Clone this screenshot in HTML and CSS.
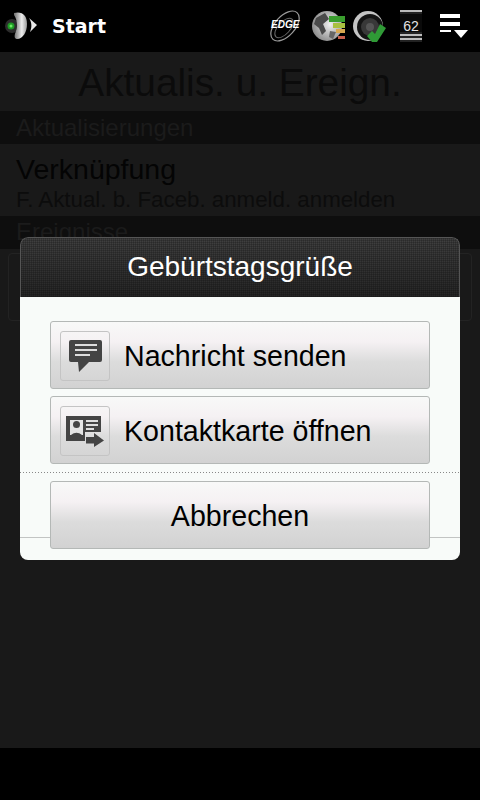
FILE: index.html
```html
<!DOCTYPE html>
<html lang="de">
<head>
    <meta charset="UTF-8">
    <meta name="viewport" content="width=device-width, initial-scale=1.0">
    <title>Start</title>
    <link rel="stylesheet" href="styles.css">
</head>
<body>
    <header class="status-bar">
        <svg class="logo" width="34" height="28" viewBox="0 0 34 28">
            <defs>
                <linearGradient id="logo-shade" x1="0" y1="0" x2="1" y2="0">
                    <stop offset="0" stop-color="#6e6e6e"/>
                    <stop offset="0.6" stop-color="#ececec"/>
                    <stop offset="1" stop-color="#9a9a9a"/>
                </linearGradient>
            </defs>
            <circle cx="7" cy="14" r="7" fill="#2c2c2c"/>
            <circle cx="6" cy="14" r="3.500" fill="#1f9a26"/>
            <circle cx="6" cy="14" r="1.500" fill="#6dee62"/>
            <path d="M9 1 C17 -1 22 3 22 12 C22 20 18 27 12 27 C8 26 10 22 11 19 C13 15 12 7 9 3Z" fill="url(#logo-shade)"/>
            <path d="M24 6 L32 13 L25 20 C27 15 27 11 24 6Z" fill="#e8e8e8"/>
        </svg>
        <span class="status-title">Start</span>
        <div class="status-icons">
            <div class="icon-edge">
                <svg width="32" height="32" viewBox="0 0 32 32">
                    <ellipse cx="16" cy="16" rx="18" ry="10" transform="rotate(-48 16 16)" fill="none" stroke="#9a9a9a" stroke-width="1.200"/>
                    <ellipse cx="15" cy="18" rx="12" ry="6" transform="rotate(-48 15 18)" fill="none" stroke="#666" stroke-width="1"/>
                </svg>
                <span class="edge-label">EDGE</span>
            </div>
            <svg class="icon-globe" width="34" height="32" viewBox="0 0 34 32">
                <defs>
                    <radialGradient id="globe-shade" cx="0.6" cy="0.45" r="0.7">
                        <stop offset="0" stop-color="#f0f0f0"/>
                        <stop offset="1" stop-color="#7c7c7c"/>
                    </radialGradient>
                </defs>
                <circle cx="15" cy="16" r="15" fill="url(#globe-shade)"/>
                <path d="M4 8 L13 3 L17 9 L11 14 L14 21 L10 25 L7 18 L2 14Z" fill="#4a4a4a"/>
                <path d="M18 21 L24 22 L21 29 L17 27Z" fill="#666"/>
                <rect x="17" y="6" width="16" height="6" fill="#3a9e2e"/>
                <rect x="21" y="13" width="12" height="5" fill="#a9c040"/>
                <rect x="24" y="19" width="9" height="4" fill="#d8a850"/>
                <rect x="26" y="26" width="7" height="3" fill="#c8604c"/>
            </svg>
            <svg class="icon-speaker" width="33" height="32" viewBox="0 0 33 32">
                <circle cx="15" cy="16" r="15" fill="#c4c4c4"/>
                <circle cx="17" cy="17" r="13" fill="#141414"/>
                <circle cx="17" cy="17" r="9" fill="#383838"/>
                <circle cx="17" cy="17" r="4" fill="#555"/>
                <path d="M14 26 L19 21 L22 24 L27 14 L33 18 L24 32 L19 32Z" fill="#2f9a36"/>
            </svg>
            <div class="battery"><span class="battery-num">62</span></div>
            <svg class="icon-menu" width="28" height="24" viewBox="0 0 28 24">
                <rect x="0" y="0" width="20" height="4" fill="#fff"/>
                <rect x="0" y="8" width="20" height="4" fill="#fff"/>
                <rect x="0" y="16" width="11" height="2" fill="#fff"/>
                <path d="M14 16 H28 L21 24Z" fill="#fff"/>
            </svg>
        </div>
    </header>

    <main class="screen">
        <h1 class="page-title">Aktualis. u. Ereign.</h1>
        <div class="section-head">Aktualisierungen</div>
        <div class="item">
            <div class="item-title">Verknüpfung</div>
            <div class="item-sub">F. Aktual. b. Faceb. anmeld. anmelden</div>
        </div>
        <div class="section-head section-head-low">Ereignisse</div>
        <div class="event-card"></div>
    </main>

    <footer class="bottom-bar"></footer>

    <div class="dialog">
        <div class="dialog-head">Gebürtstagsgrüße</div>
        <div class="dialog-body">
            <button class="btn">
                <span class="btn-icon">
                    <svg width="33" height="32" viewBox="0 0 33 32">
                        <path d="M2 0 H31 a2 2 0 0 1 2 2 V20 a2 2 0 0 1 -2 2 H20 L10 32 L9 22 H2 a2 2 0 0 1 -2 -2 V2 a2 2 0 0 1 2 -2Z" fill="#444"/>
                        <rect x="6" y="4" width="22" height="2" fill="#ddd"/>
                        <rect x="6" y="9" width="22" height="2" fill="#ddd"/>
                        <rect x="6" y="14" width="15" height="2" fill="#ddd"/>
                    </svg>
                </span>
                <span class="btn-label">Nachricht senden</span>
            </button>
            <button class="btn btn-last">
                <span class="btn-icon">
                    <svg width="38" height="31" viewBox="0 0 38 31">
                        <path d="M0 0 H35 V16 H19 V25 H0Z" fill="#444"/>
                        <rect x="4" y="4" width="13" height="15" fill="#e4e4e4"/>
                        <circle cx="10.500" cy="8.500" r="3.500" fill="#444"/>
                        <path d="M3 25 C3 14 18 14 18 25Z" fill="#444"/>
                        <rect x="20" y="4" width="12" height="2" fill="#ddd"/>
                        <rect x="20" y="8" width="12" height="2" fill="#ddd"/>
                        <rect x="20" y="12" width="8" height="2" fill="#ddd"/>
                        <path d="M20 21 H28 V17 L38 24.500 L28 31 V27.500 H20Z" fill="#444"/>
                    </svg>
                </span>
                <span class="btn-label">Kontaktkarte öffnen</span>
            </button>
            <div class="dots"></div>
            <div class="cancel-wrap">
                <button class="btn btn-cancel"><span class="btn-label-plain">Abbrechen</span></button>
            </div>
        </div>
    </div>
</body>
</html>
```

FILE: styles.css
```css
body {
    font-family: "Liberation Sans", Arial, sans-serif;
    margin: 0;
    width: 480px;
    height: 800px;
    background-color: #000;
    display: flex;
    flex-direction: column;
    overflow: hidden;
    position: relative;
}
.status-bar {
    height: 52px;
    display: flex;
    align-items: center;
    background-color: #000;
    flex-shrink: 0;
}
.logo {
    margin-left: 5px;
}
.status-title {
    margin-left: 13px;
    color: #fff;
    font-family: "DejaVu Sans", sans-serif;
    font-weight: bold;
    font-size: 19px;
}
.status-icons {
    margin-left: auto;
    display: flex;
    align-items: center;
    padding-right: 12px;
}
.icon-edge {
    position: relative;
    width: 32px;
    height: 32px;
}
.edge-label {
    position: absolute;
    left: 2px;
    top: 9px;
    color: #fff;
    font-size: 10px;
    font-weight: bold;
    font-style: italic;
}
.icon-globe {
    margin-left: 11px;
}
.icon-speaker {
    margin-left: 7px;
}
.battery {
    width: 22px;
    height: 32px;
    margin-left: 14px;
    background:
        linear-gradient(#0a0a0a, #0a0a0a) 0 4px / 100% 18px no-repeat,
        repeating-linear-gradient(#bbb 0 2px, #222 2px 4px);
    display: flex;
    align-items: center;
    justify-content: center;
}
.battery-num {
    color: #e4e4e4;
    font-size: 14px;
}
.icon-menu {
    margin-left: 18px;
}
.screen {
    height: 696px;
    background-color: #191919;
    flex-shrink: 0;
}
.page-title {
    margin: 0;
    height: 59px;
    line-height: 62px;
    text-align: center;
    font-size: 38.800px;
    font-weight: normal;
    color: #0b0b0b;
}
.section-head {
    height: 33px;
    line-height: 33px;
    padding-left: 16px;
    background-color: #0e0e0e;
    color: #1b1b1b;
    font-size: 24px;
}
.section-head-low {
    line-height: 31px;
}
.item {
    height: 72px;
    padding-left: 16px;
    box-sizing: border-box;
    padding-top: 9px;
}
.item-title {
    font-size: 28.500px;
    line-height: 32px;
    color: #040404;
}
.item-sub {
    font-size: 22.300px;
    line-height: 29px;
    color: #0c0c0c;
}
.event-card {
    margin: 4px 8px 0;
    height: 66px;
    border: 1px solid #232323;
    border-radius: 4px;
}
.bottom-bar {
    flex-grow: 1;
    background-color: #000;
}
.dialog {
    position: absolute;
    left: 20px;
    top: 237px;
    width: 440px;
    height: 323px;
    border-radius: 8px;
    overflow: hidden;
    display: flex;
    flex-direction: column;
}
.dialog-head {
    height: 60px;
    box-sizing: border-box;
    line-height: 57px;
    text-align: center;
    color: #fff;
    font-size: 28px;
    background:
        repeating-linear-gradient(90deg, rgba(0, 0, 0, .18) 0 1px, transparent 1px 2px),
        repeating-linear-gradient(rgba(0, 0, 0, .18) 0 1px, transparent 1px 2px),
        linear-gradient(#404040, #262626);
    border: 1px solid #555;
    border-bottom: none;
    border-radius: 8px 8px 0 0;
}
.dialog-body {
    flex-grow: 1;
    background-color: #f8fbf9;
    display: flex;
    flex-direction: column;
    padding-top: 24px;
}
.btn {
    font-family: inherit;
    width: 380px;
    height: 68px;
    margin: 0 30px 7px;
    padding: 0;
    box-sizing: border-box;
    display: flex;
    align-items: center;
    border: 1px solid #b4b8b6;
    border-radius: 3px;
    color: #000;
    font-size: 28.600px;
    background: linear-gradient(#f8f9f8 0%, #f5f1f3 30%, #dcdcdc 60%, #d2d2d2 100%);
}
.btn-last {
    margin-bottom: 8px;
}
.btn-icon {
    width: 50px;
    height: 50px;
    margin: 9px 0 0 9px;
    box-sizing: border-box;
    border: 1px solid #c4c4c4;
    border-radius: 3px;
    display: flex;
    align-items: center;
    justify-content: center;
    flex-shrink: 0;
    align-self: flex-start;
}
.btn-label {
    margin-left: 14px;
    padding-top: 2px;
}
.btn-label-plain {
    padding-top: 2px;
}
.dots {
    height: 1px;
    background-image: repeating-linear-gradient(to right, #888 0 1px, transparent 1px 3px);
    flex-shrink: 0;
}
.cancel-wrap {
    flex-grow: 1;
    padding-top: 8px;
    background: linear-gradient(to bottom, transparent 64px, #c2c4c3 64px, #c2c4c3 65px, transparent 65px);
}
.btn-cancel {
    justify-content: center;
    margin-bottom: 0;
}
```
